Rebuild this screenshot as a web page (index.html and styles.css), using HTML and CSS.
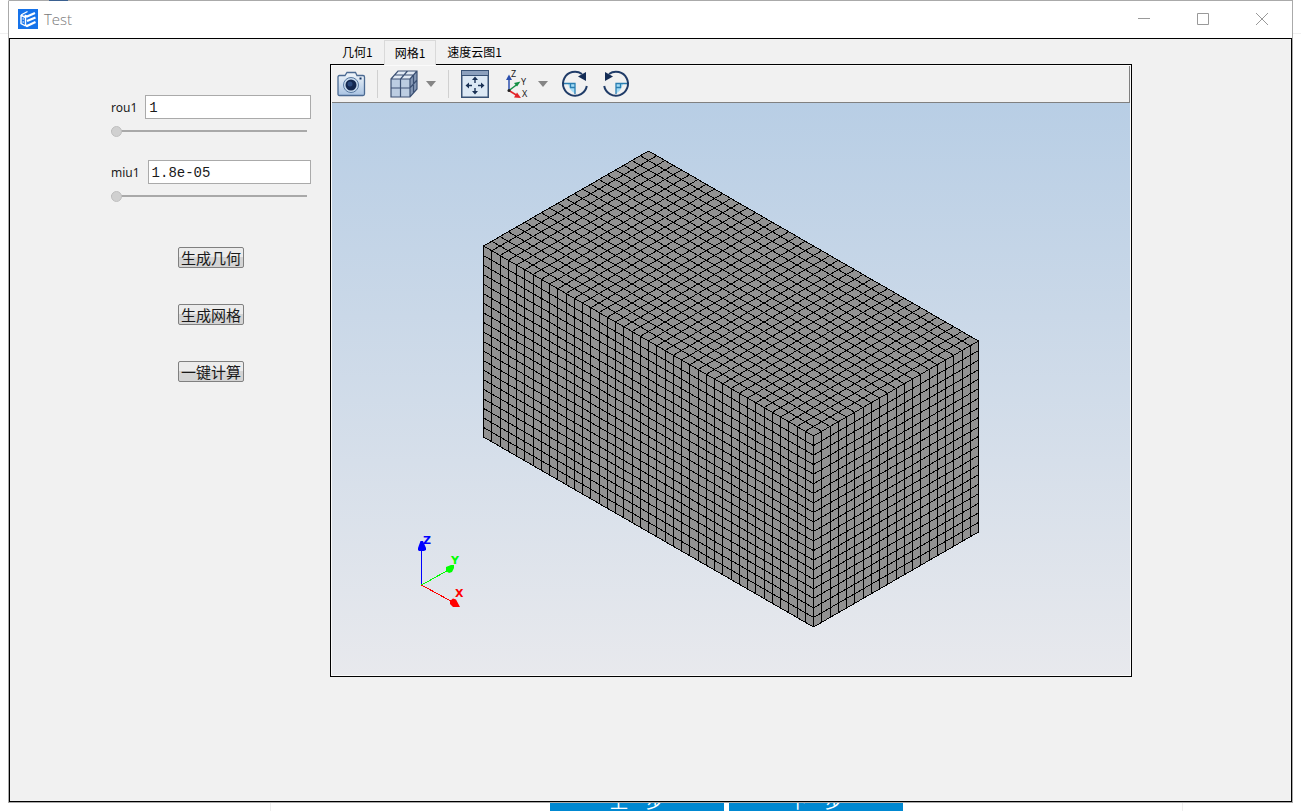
FILE: index.html
```html
<!DOCTYPE html>
<html lang="zh-CN">
<head>
<meta charset="utf-8">
<title>Test</title>
<link rel="stylesheet" href="styles.css">
</head>
<body>
<div class="window">
  <header class="titlebar">
    <svg class="logo" width="20" height="20" viewBox="0 0 20 20" aria-hidden="true">
      <rect width="20" height="20" fill="#1673ea"/>
      <path d="M3 6 9.500 2.500M3 6v8.500l4.500 2.500M3.500 6.500l4 2V17" fill="none" stroke="#fff" stroke-width="1.400"/>
      <path d="M6.500 6.500 9 7.500l8-3.500M9 12l8.500-3.500M8 16.500l1 .500 8.500-4" fill="none" stroke="#fff" stroke-width="2.200"/>
      <path d="M4.500 10h1.500M4.500 13h1.500" stroke="#fff"/>
    </svg>
    <h1 class="title">Test</h1>
    <div class="controls">
      <button class="control" aria-label="最小化"><svg width="12" height="12" viewBox="0 0 12 12"><path d="M0 5.500h12"/></svg></button>
      <button class="control" aria-label="最大化"><svg width="12" height="12" viewBox="0 0 12 12"><path d="M.500.500h11v11H.500z"/></svg></button>
      <button class="control" aria-label="关闭"><svg width="12" height="12" viewBox="0 0 12 12"><path d="m0 0 12 12M12 0 0 12"/></svg></button>
    </div>
  </header>
  <main class="content">
    <form class="panel">
      <div class="row"><label for="rou">rou1</label><input class="value" id="rou" type="text" value="1"></div>
      <input class="slider" type="range" min="0" max="100" value="0" aria-label="rou1">
      <div class="row"><label for="miu">miu1</label><input class="value" id="miu" type="text" value="1.8e-05"></div>
      <input class="slider" type="range" min="0" max="100" value="0" aria-label="miu1">
      <div class="actions">
        <button class="action" type="button">生成几何</button>
        <button class="action" type="button">生成网格</button>
        <button class="action" type="button">一键计算</button>
      </div>
    </form>
    <section class="viewer">
      <div class="tabs" role="tablist">
        <button class="tab" role="tab" aria-selected="false">几何1</button>
        <button class="tab selected" role="tab" aria-selected="true">网格1</button>
        <button class="tab" role="tab" aria-selected="false">速度云图1</button>
      </div>
      <div class="frame">
        <div class="toolbar">
          <button class="tool" aria-label="截图">
            <svg width="28" height="28" viewBox="0 0 28 28">
              <defs><linearGradient id="body" x2="0" y2="1"><stop stop-color="#f2f7fb"/><stop offset="1" stop-color="#a9c3e2"/></linearGradient></defs>
              <path d="M1 7q0-1.500 1.500-1.500H8L10 2.500h8.500L20 5.500h6q1.500 0 1.500 1.500v17q0 1.500-1.500 1.500H2.500Q1 25.500 1 24z" fill="url(#body)" stroke="#4b6a92" stroke-width="1.300"/>
              <circle cx="14" cy="15" r="7.500" fill="#c9dcef" stroke="#5878a0"/>
              <circle cx="14" cy="15" r="5.500" fill="#14284f"/>
              <circle cx="13" cy="14" r="2.500" fill="#2c4a7d"/>
              <path d="M22.500 8.500h2" stroke="#173463" stroke-width="2"/>
            </svg>
          </button>
          <span class="separator"></span>
          <button class="tool" aria-label="视图">
            <svg width="28" height="28" viewBox="0 0 28 28">
              <path d="M1 9 8 1h19l-7 8z" fill="#e2eaf4"/>
              <path d="M1 9h19v18H1z" fill="#bccde2"/>
              <path d="m20 9 7-8v18l-7 8z" fill="#8598b5"/>
              <path d="M1 9 8 1h19v18l-7 8H1zh19v18M20 9l7-8M10.500 27V9l7-8M1 18h19l7-8M4.500 5h19v18" fill="none" stroke="#3c5174" stroke-width="1.200"/>
            </svg>
          </button>
          <button class="arrow" aria-label="更多视图"><svg width="10" height="6" viewBox="0 0 10 6"><path d="M0 0h10L5 6z" fill="#858585"/></svg></button>
          <span class="separator"></span>
          <button class="tool" aria-label="适应窗口">
            <svg width="28" height="28" viewBox="0 0 28 28">
              <path d="M.750.750h26.500v26.500H.750z" fill="#dce8f4" stroke="#385174" stroke-width="1.500"/>
              <path d="M1 1h26v4H1z" fill="#8ca0bd"/><path d="M1 5.500h26" stroke="#385174"/>
              <path d="M14 9v4M14 18v4M7 15.500h4M17 15.500h4" stroke="#1a3155" stroke-width="1.400"/>
              <path d="m11 10 3-3.500 3 3.500zM11 21l3 3.500 3-3.500zM8 12.500l-3.500 3L8 18.500zM20 12.500l3.500 3-3.500 3z" fill="#1a3155"/>
            </svg>
          </button>
          <button class="tool axes" aria-label="坐标方向">
            <svg width="24" height="30" viewBox="0 0 24 30">
              <path d="M3 21.500V9" stroke="#2b4fae" stroke-width="1.500"/><path d="m0 11 3-5.500L6 11z" fill="#2b4fae"/>
              <path d="m3 21.500 8-6" stroke="#149044" stroke-width="1.500"/><path d="m8 14 6.500-1.500-3.500 5z" fill="#149044"/>
              <path d="m3 21.500 8 5" stroke="#e3242a" stroke-width="1.500"/><path d="m11 23.500 4 5.500-7-.500z" fill="#e3242a"/>
              <circle cx="3" cy="21.500" r="1.500" fill="#222"/>
              <text x="5" y="8" class="icon-letter">Z</text><text x="15" y="16" class="icon-letter">Y</text><text x="16" y="28" class="icon-letter">X</text>
            </svg>
          </button>
          <button class="arrow wide" aria-label="更多方向"><svg width="10" height="6" viewBox="0 0 10 6"><path d="M0 0h10L5 6z" fill="#858585"/></svg></button>
          <button class="tool rotate" aria-label="顺时针旋转">
            <svg width="28" height="28" viewBox="0 0 28 28">
              <path d="M7 14h7v9.500q-5-2.500-7-9.500z" fill="#a5dcf6"/>
              <path d="M2.500 13.500H14V24M9.500 13.500v4H14" fill="none" stroke="#2b7fb2" stroke-width="1.300"/>
              <path d="M21 4A12 12 0 1 0 25.800 16" fill="none" stroke="#203c68" stroke-width="2"/>
              <path d="m17 6.500 8-4.500v9z" fill="#142c55"/>
            </svg>
          </button>
          <button class="tool rotate" aria-label="逆时针旋转">
            <svg width="28" height="28" viewBox="0 0 28 28">
              <path d="M21 14h-7v9.500q5-2.500 7-9.500z" fill="#a5dcf6"/>
              <path d="M25.500 13.500H14V24M18.500 13.500v4H14" fill="none" stroke="#2b7fb2" stroke-width="1.300"/>
              <path d="M7 4A12 12 0 1 1 2.200 16" fill="none" stroke="#203c68" stroke-width="2"/>
              <path d="M11 6.500 3 2v9z" fill="#142c55"/>
            </svg>
          </button>
        </div>
        <svg class="scene" viewBox="0 0 798 572" role="img" aria-label="网格">
          <path d="M151.500 143 316.500 48l330 190v191l-165 95-330-190z" fill="#929292" shape-rendering="crispEdges"/>
          <path id="mesh" fill="none" stroke="#000" shape-rendering="crispEdges"/>
          <g shape-rendering="crispEdges" fill="none">
            <path d="M89.500 482v-38" stroke="#00f"/><path d="m89.500 482 26-14.500" stroke="#0f0"/><path d="m89.500 482 31 17" stroke="red"/>
          </g>
          <path d="M88.500 438h2.500l3 7v2l-2 1h-5l-1-1v-2z" fill="#00f"/>
          <path d="m114 464 5-2h3v3l-2 4-3 1-3-2z" fill="#0f0"/>
          <path d="m121 495.500 3 1 4 7.500h-7l-3-3v-3z" fill="red"/>
          <text x="91" y="441" fill="#00f" class="axis">Z</text>
          <text x="119" y="461" fill="#0f0" class="axis">Y</text>
          <text x="123" y="494" fill="red" class="axis">X</text>
        </svg>
      </div>
    </section>
  </main>
</div>
<div class="page-behind">
  <div class="page-column">
    <button class="step">上一步</button>
    <button class="step">下一步</button>
  </div>
</div>
<script src="mesh.js"></script>
</body>
</html>
```

FILE: styles.css
```css
* { box-sizing: border-box; }

body {
  margin: 0;
  min-height: 100vh;
  display: flex;
  flex-direction: column;
  background: linear-gradient(#f0f0f0, #f0f0f0) 0 33px / 100% 1px no-repeat #fff;
  font-family: "Noto Sans", "Noto Sans CJK SC", sans-serif;
  font-size: 12px;
  color: #1a1a1a;
}

button {
  border: 0;
  padding: 0;
  background: none;
  color: inherit;
  font: inherit;
}

svg { display: block; }

.window {
  flex: 1;
  display: flex;
  flex-direction: column;
  margin: 0 8px;
  border: 1px solid #aaa;
  border-top-color: transparent;
  background:
    linear-gradient(#3a6090, #3a6090) 41px 0 / 19px 1px no-repeat border-box,
    linear-gradient(#aaa, #aaa) 0 0 / 100% 1px no-repeat border-box,
    #fff;
}

.titlebar {
  display: flex;
  align-items: center;
  height: 37px;
  padding: 0 1px 2px 9px;
}

.title {
  margin: 0 auto 0 6px;
  font: 300 15px/20px "Open Sans", sans-serif;
  color: #777;
}

.controls { display: flex; }

.control {
  display: grid;
  place-items: center;
  width: 59px;
  height: 34px;
}

.control svg {
  fill: none;
  stroke: #999;
}

.content {
  flex: 1;
  display: flex;
  align-items: flex-start;
  border: 1px solid #000;
  background: #f1f1f1;
}

.panel {
  flex: 0 0 320px;
  min-width: 0;
  padding: 56px 19px 0 101px;
}

.row {
  display: flex;
  align-items: center;
  gap: 8px;
}

.value {
  flex: 1;
  min-width: 0;
  height: 24px;
  padding: 1px 3px 0;
  border: 1px solid #aaa;
  border-radius: 0;
  background: #fff;
  color: #1a1a1a;
  font: 14px "Liberation Mono", monospace;
}

.slider {
  display: block;
  width: 196px;
  height: 16px;
  margin: 4px 0 21px;
  appearance: none;
  background: linear-gradient(#a9a9a9, #a9a9a9) center / 100% 2px no-repeat;
}

.slider::-webkit-slider-thumb {
  appearance: none;
  width: 11px;
  height: 11px;
  border: 1px solid #c0c0c0;
  border-radius: 50%;
  background: #d0d0d0;
}

.actions {
  display: flex;
  flex-direction: column;
  align-items: center;
  gap: 36px;
  padding-top: 22px;
}

.action {
  height: 21px;
  padding: 0 2px;
  border: 1px solid #808080;
  border-radius: 2px;
  background: linear-gradient(#ececec 50%, #d4d4d4 50%);
  font: 15px/18px "Noto Sans CJK SC", sans-serif;
  white-space: nowrap;
}

.viewer {
  flex: 1;
  min-width: 0;
  margin-right: 159px;
}

.tabs {
  display: flex;
  height: 25px;
  padding: 1px 0 0 1px;
}

.tab {
  padding: 0 11px;
  font-family: "Noto Sans CJK SC", sans-serif;
  line-height: 24px;
  color: #000;
}

.tab.selected {
  position: relative;
  height: 25px;
  padding: 0 10px;
  border: 1px solid #d9d9d9;
  border-bottom: 0;
  background: #f1f1f1;
}

.frame {
  padding: 1px;
  border: 1px solid #000;
  background: #fafafa;
}

.toolbar {
  display: flex;
  align-items: center;
  height: 37px;
  padding-left: 5px;
  border: solid #808080;
  border-width: 0 1px 1px 0;
  background: #f1f1f1;
}

.toolbar svg { overflow: visible; }

.separator {
  width: 1px;
  height: 28px;
  margin: 0 12px;
  background: #d0d0d0;
}

.arrow { margin-left: 8px; }
.arrow.wide { margin-left: 8px; }
.axes { margin-left: 17px; }
.rotate { margin-left: 13px; }

.icon-letter {
  font: 9px "Noto Sans", sans-serif;
  fill: #222;
}

.scene {
  width: 100%;
  height: auto;
  background: linear-gradient(#b8cee5, #e8e9ed);
}

.axis { font: bold 11px "DejaVu Sans", sans-serif; }

.page-behind {
  display: flex;
  justify-content: center;
  height: 8px;
  padding: 0 118px 0 270px;
  overflow: hidden;
}

.page-column {
  flex: 1;
  display: flex;
  align-items: flex-end;
  justify-content: center;
  gap: 5px;
  border: solid #eee;
  border-width: 0 1px;
}

.step {
  flex: 0 0 174px;
  height: 32px;
  padding-top: 10px;
  background: #0088d1;
  color: #fff;
  font: 18px/22px "Noto Sans CJK SC", sans-serif;
}
```

FILE: mesh.js
```js
// Box corners in scene coordinates; each face is a grid spanned by two edges.
const faces = [
  { origin: [151.5, 143], u: [330, 190], v: [165, -95], nu: 40, nv: 20 },
  { origin: [151.5, 143], u: [330, 190], v: [0, 191], nu: 40, nv: 20 },
  { origin: [481.5, 333], u: [165, -95], v: [0, 191], nu: 20, nv: 20 }
];

function gridLines(origin, along, across, count) {
  let d = "";
  for (let i = 0; i <= count; i++) {
    const x = origin[0] + across[0] * i / count;
    const y = origin[1] + across[1] * i / count;
    d += `M${x} ${y}l${along[0]} ${along[1]}`;
  }
  return d;
}

document.getElementById("mesh").setAttribute("d", faces.map(f =>
  gridLines(f.origin, f.u, f.v, f.nv) + gridLines(f.origin, f.v, f.u, f.nu)
).join(""));
```
